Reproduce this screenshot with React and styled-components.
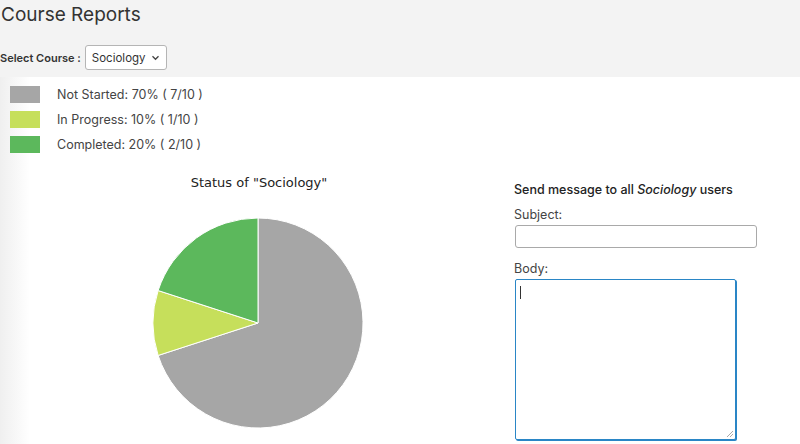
import styled, { createGlobalStyle } from 'styled-components';

const GlobalStyle = createGlobalStyle`
    body {
        margin: 0;
        font-family: Inter, "Open Sans", sans-serif;
        color: #333;
        background: #fff;
    }
`

const legend = [
    { label: 'Not Started: 70% ( 7/10 )', color: '#a6a6a6' },
    { label: 'In Progress: 10% ( 1/10 )', color: '#c6df5b' },
    { label: 'Completed: 20% ( 2/10 )', color: '#5cb85c' },
];

function PieChart(){
    return (
        <svg width="212" height="212" viewBox="0 0 212 212">
            <path d="M106 106 L106 1 A105 105 0 1 1 6.14 138.45 Z" fill="#a6a6a6" stroke="#fff" strokeWidth="1" />
            <path d="M106 106 L6.14 138.45 A105 105 0 0 1 6.14 73.55 Z" fill="#c6df5b" stroke="#fff" strokeWidth="1" />
            <path d="M106 106 L6.14 73.55 A105 105 0 0 1 106 1 Z" fill="#5cb85c" stroke="#fff" strokeWidth="1" />
        </svg>
    );
}

function App(){
    return (
        <Page>
            <GlobalStyle />
            <Header>
                <Title>Course Reports</Title>
                <SelectRow>
                    <SelectLabel>Select Course :</SelectLabel>
                    <SelectBox>
                        Sociology
                        <svg width="9" height="6" viewBox="0 0 10 7">
                            <path d="M1.5 1.5 L5 5 L8.5 1.5" fill="none" stroke="#444" strokeWidth="1.5" />
                        </svg>
                    </SelectBox>
                </SelectRow>
            </Header>
            <Body>
                <Legend>
                    {legend.map((item, i) => (
                        <LegendRow key={i}>
                            <Swatch color={item.color} />
                            <LegendText>{item.label}</LegendText>
                        </LegendRow>
                    ))}
                </Legend>
                <Columns>
                    <ChartPanel>
                        <ChartTitle>Status of "Sociology"</ChartTitle>
                        <PieChart />
                    </ChartPanel>
                    <FormPanel>
                        <FormHeading>Send message to all <em>Sociology</em> users</FormHeading>
                        <FieldLabel>Subject:</FieldLabel>
                        <SubjectInput />
                        <FieldLabel top={13}>Body:</FieldLabel>
                        <BodyArea>
                            <Caret />
                        </BodyArea>
                    </FormPanel>
                </Columns>
            </Body>
        </Page>
    );
}

const Page = styled.div`
    width: 800px;
    height: 444px;
    overflow: hidden;
`

const Header = styled.div`
    background: #f3f3f3;
    height: 77px;
    box-sizing: border-box;
    padding-top: 3px;
`

const Title = styled.div`
    font-size: 19px;
    color: #333;
    padding-left: 1px;
    line-height: 24px;
`

const SelectRow = styled.div`
    display: flex;
    align-items: center;
    margin-top: 18px;
`

const SelectLabel = styled.div`
    font-size: 11px;
    font-weight: 600;
    color: #333;
    margin-right: 4px;
`

const SelectBox = styled.div`
    display: flex;
    align-items: center;
    gap: 5px;
    height: 25px;
    box-sizing: border-box;
    padding: 0 6px 0 6px;
    border: 1px solid #b5b5b5;
    border-radius: 3px;
    background: #fff;
    font-size: 11.5px;
    color: #333;
`

const Body = styled.div`
    background: linear-gradient(to right, #efefef 0px, #fff 30px);
    height: 367px;
`

const Legend = styled.div`
    display: flex;
    flex-direction: column;
    gap: 8px;
    padding: 9px 0 0 10px;
`

const LegendRow = styled.div`
    display: flex;
    align-items: center;
`

const Swatch = styled.div`
    width: 30px;
    height: 17px;
    background: ${props => props.color};
    margin-right: 17px;
`

const LegendText = styled.div`
    font-size: 12.5px;
    color: #444;
`

const Columns = styled.div`
    display: flex;
`

const ChartPanel = styled.div`
    width: 516px;
    display: flex;
    flex-direction: column;
    align-items: center;
    padding-top: 22px;
`

const ChartTitle = styled.div`
    font-family: "DejaVu Sans", sans-serif;
    font-size: 13px;
    color: #222;
    margin-bottom: 27px;
    padding-left: 2px;
`

const FormPanel = styled.div`
    display: flex;
    flex-direction: column;
    align-items: flex-start;
    padding-top: 29px;
    margin-left: -2px;
`

const FormHeading = styled.div`
    font-size: 12.5px;
    font-weight: 500;
    color: #222;
    em { font-style: italic; }
`

const FieldLabel = styled.div`
    font-size: 12.5px;
    color: #444;
    margin-top: ${props => props.top || 10}px;
    margin-bottom: 3px;
`

const SubjectInput = styled.div`
    width: 242px;
    height: 23px;
    box-sizing: border-box;
    border: 1px solid #a9a9a9;
    border-radius: 3px;
    background: #fff;
    margin-left: 1px;
`

const BodyArea = styled.div`
    position: relative;
    width: 221px;
    height: 161px;
    box-sizing: border-box;
    border: 1px solid #2a86c6;
    box-shadow: 1px 1px 0 #2a86c6;
    border-radius: 2px;
    background: #fff;
    margin-left: 1px;
    &::after {
        content: '';
        position: absolute;
        right: 2px;
        bottom: 2px;
        width: 6px;
        height: 6px;
        background: linear-gradient(135deg, transparent 45%, #aaa 45%, #aaa 55%, transparent 55%, transparent 70%, #aaa 70%, #aaa 80%, transparent 80%);
    }
`

const Caret = styled.div`
    position: absolute;
    left: 4px;
    top: 6px;
    width: 1px;
    height: 13px;
    background: #333;
`

export default App;
